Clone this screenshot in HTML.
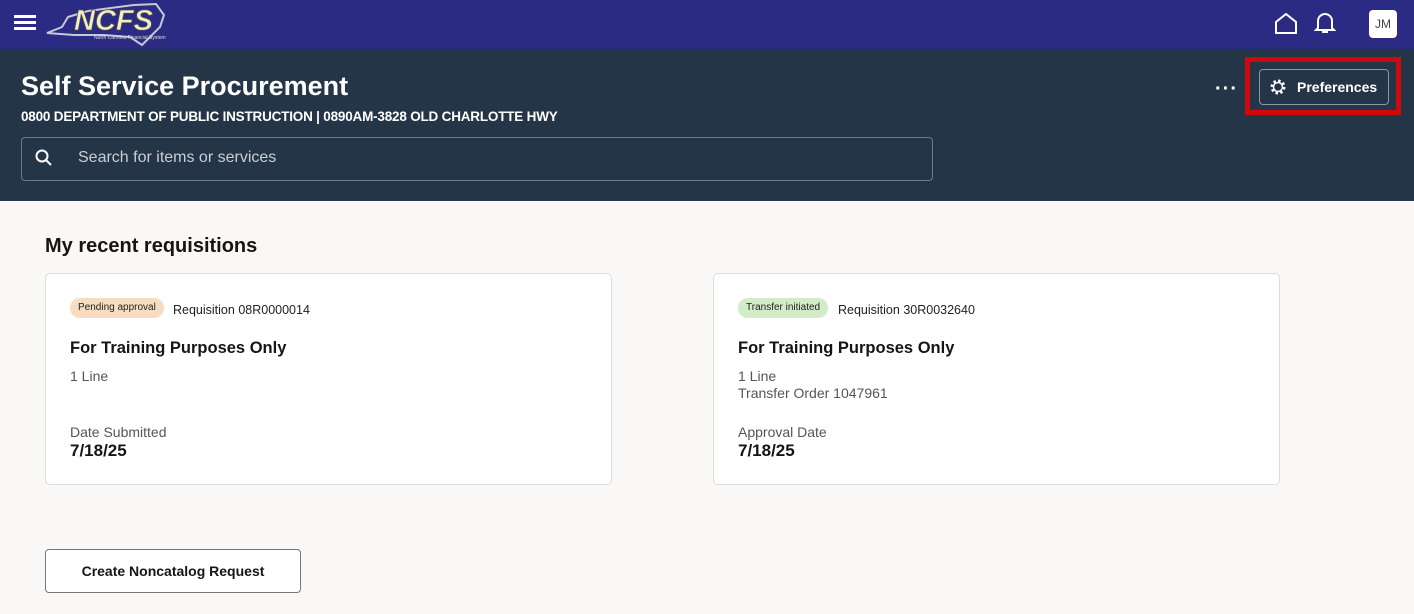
<!DOCTYPE html>
<html><head><style>
body{margin:0;width:1414px;height:614px;overflow:hidden;background:#f9f8f6;font-family:"Liberation Sans",sans-serif;position:relative}
.top{position:absolute;left:0;top:0;width:1414px;height:49px;background:#2b2b83}
.hdr{position:absolute;left:0;top:49px;width:1414px;height:152px;background:#253548}
.a{position:absolute}
.card{position:absolute;top:273px;width:565px;height:210px;background:#fff;border:1px solid #dedcd8;border-radius:5px}
.tag{position:absolute;left:24px;top:24px;height:20px;line-height:20px;padding:0 8px;border-radius:10px;font-size:10px;color:#222}
.req{position:absolute;top:29px;font-size:12.5px;color:#222}
.t{position:absolute;left:24px;top:65px;font-size:16.5px;font-weight:bold;color:#161513}
.s{position:absolute;left:24px;font-size:14px;color:#555;line-height:17px}
.d{position:absolute;left:24px;top:167px;font-size:17px;font-weight:bold;color:#161513}
</style></head><body>
<div class="top"></div>
<div class="a" style="left:14px;top:15px;width:22px;height:3px;background:#fff;box-shadow:0 6px 0 #fff,0 12px 0 #fff"></div>
<svg class="a" style="left:44px;top:1px" width="122" height="47"><path d="M3 32 L18 26 L24 16 L44 10 L90 4 L112 3 L120 14 L116 26 L106 36 L98 44 L86 36 L60 34 L30 34 Z" fill="none" stroke="#c8c8d8" stroke-width="2"/><text x="30" y="29" font-family="Liberation Sans" font-weight="bold" font-style="italic" font-size="29" fill="#f3edc8" stroke="#554" stroke-width=".7">NCFS</text><text x="50" y="38" font-family="Liberation Sans" font-size="5" fill="#ddd">North Carolina Financial System</text></svg>
<svg class="a" style="left:1274px;top:12px" width="24" height="24"><path d="M2 21 V10 L12 2 L22 10 V21 Z" fill="none" stroke="#fff" stroke-width="2"/></svg>
<svg class="a" style="left:1314px;top:11px" width="22" height="24"><path d="M4 17 V10 A7 7 0 0 1 18 10 V17 L20 19 H2 Z M8 21 H14" fill="none" stroke="#fff" stroke-width="2"/></svg>
<div class="a" style="left:1369px;top:10px;width:28px;height:28px;background:#fff;border-radius:4px;text-align:center;line-height:28px;font-size:12px;color:#444">JM</div>
<div class="hdr"></div>
<div class="a" style="left:21px;top:71px;font-size:27px;font-weight:bold;color:#fff">Self Service Procurement</div>
<div class="a" style="left:21px;top:109px;font-size:13.5px;font-weight:bold;color:#fff;letter-spacing:-0.2px">0800 DEPARTMENT OF PUBLIC INSTRUCTION | 0890AM-3828 OLD CHARLOTTE HWY</div>
<div class="a" style="left:21px;top:137px;width:910px;height:42px;border:1px solid #6b7b8d;border-radius:4px"></div>
<svg class="a" style="left:35px;top:149px" width="18" height="18"><circle cx="7" cy="7" r="5.5" fill="none" stroke="#fff" stroke-width="2"/><path d="M11 11 L16 16" stroke="#fff" stroke-width="2"/></svg>
<div class="a" style="left:78px;top:149px;font-size:16px;color:#c8ced6">Search for items or services</div>
<div class="a" style="left:1215px;top:78px;font-size:20px;color:#fff;letter-spacing:1px;font-weight:bold">···</div>
<div class="a" style="left:1245px;top:57px;width:156px;height:58px;box-sizing:border-box;border:5px solid #d0090c"></div>
<div class="a" style="left:1259px;top:69px;width:128px;height:34px;border:1px solid #8a97a6;border-radius:4px"></div>
<svg class="a" style="left:1269px;top:78px" width="18" height="18"><circle cx="9" cy="9" r="6" fill="none" stroke="#fff" stroke-width="3" stroke-dasharray="2.4 2.3"/><circle cx="9" cy="9" r="4.5" fill="none" stroke="#fff" stroke-width="1.5"/></svg>
<div class="a" style="left:1297px;top:79px;font-size:14px;font-weight:bold;color:#fff">Preferences</div>
<div class="a" style="left:45px;top:235px;font-size:20px;font-weight:bold;color:#161513">My recent requisitions</div>
<div class="card" style="left:45px"><div class="tag" style="background:#f8dcc0">Pending approval</div><div class="req" style="left:127px">Requisition 08R0000014</div><div class="t">For Training Purposes Only</div><div class="s" style="top:94px">1 Line</div><div class="s" style="top:150px">Date Submitted</div><div class="d">7/18/25</div></div>
<div class="card" style="left:713px"><div class="tag" style="background:#d2ebc8">Transfer initiated</div><div class="req" style="left:124px">Requisition 30R0032640</div><div class="t">For Training Purposes Only</div><div class="s" style="top:94px">1 Line<br>Transfer Order 1047961</div><div class="s" style="top:150px">Approval Date</div><div class="d">7/18/25</div></div>
<div class="a" style="left:45px;top:549px;width:254px;height:42px;border:1px solid #777;border-radius:4px;background:#fff;text-align:center;line-height:42px;font-size:14px;font-weight:bold;color:#161513">Create Noncatalog Request</div>
</body></html>
